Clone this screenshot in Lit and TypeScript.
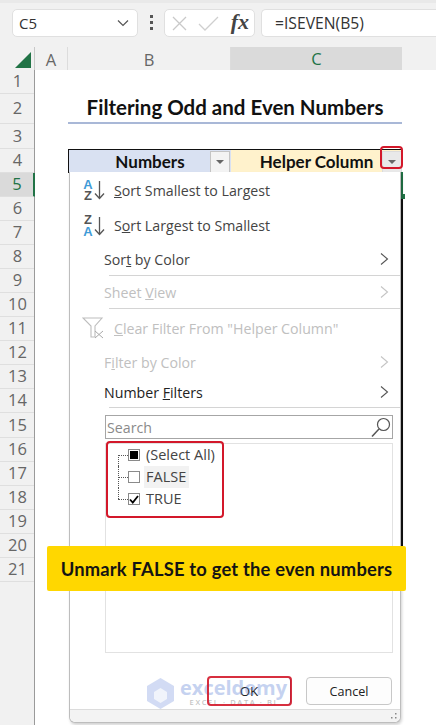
import { LitElement, html, css, svg } from "lit";
import { customElement } from "lit/decorators.js";

const chevron = (dim = false) => html`<svg class="chev" width="9" height="14" viewBox="0 0 9 14"><path d="M1 1.5 L7.5 7 L1 12.5" fill="none" stroke=${dim ? "#c4c4c4" : "#555"} stroke-width="1.1"/></svg>`;
const arrow = svg`<path d="M5.5 1 V18.5 M1 13.5 L5.5 18.5 L10 13.5" fill="none" stroke="#555" stroke-width="1.3"/>`;
const rowHeights = [24, 30, 25, 24, ...Array(17).fill(24.05)];

@customElement("app-root")
export class AppRoot extends LitElement {
  static styles = css`
    :host { display: block; width: 436px; height: 725px; font-family: "Open Sans", sans-serif; }
    * { box-sizing: border-box; }
    .app { position: relative; width: 436px; height: 725px; overflow: hidden; background: #f1f1f1; color: #333; display: flex; flex-direction: column; }

    .fbar { height: 47px; padding: 9px 0 0 12px; display: flex; align-items: flex-start; border-top: 3px solid #e9e9e9; }
    .box { height: 28px; background: #fff; border: 1px solid #e0e0e0; border-radius: 5px; display: flex; align-items: center; margin-top: -3px; }
    .name { width: 126px; padding: 0 8px 0 6px; justify-content: space-between; font-size: 15px; color: #333; }
    .dots { width: 26px; display: flex; flex-direction: column; align-items: center; gap: 3px; padding-top: 6px; margin-top: -3px; }
    .dots i { width: 3px; height: 3px; background: #555; display: block; }
    .fx { width: 91px; padding: 0 5px 0 7px; }
    .fx .check { margin-left: 11px; }
    .fxt { margin-left: auto; font-family: "Liberation Serif", serif; font-style: italic; font-weight: 700; font-size: 22px; line-height: 1; padding-bottom: 3px; color: #444; }
    .formula { flex: 1; margin-left: 6px; padding-left: 13px; border-right: none; border-radius: 5px 0 0 5px; font-size: 15.7px; color: #333; }

    .sheet { flex: 1; display: flex; flex-direction: column; }
    .colhead { height: 23px; display: grid; grid-template-columns: 35px 33px 163px 171px 1fr; font-size: 16.5px; color: #666; }
    .colhead > div { display: flex; align-items: center; justify-content: center; border-right: 1px solid #dcdcdc; padding-bottom: 1px; }
    .colhead > .corner { justify-content: flex-end; padding: 0 3px 1px 0; border-right: 1px solid #c8c8c8; }
    .colhead > .sel { background: #dadada; border-bottom: 2px solid #217346; color: #217346; border-right: none; }
    .colhead > .last { border: none; }

    .body { flex: 1; display: flex; }
    .rows { width: 35px; border-right: 1px solid #9a9a9a; flex: none; }
    .rownum { display: flex; align-items: center; justify-content: center; padding: 0 0 2px 1px; border-bottom: 1px solid #dfdfdf; font-size: 16.5px; color: #666; }
    .rownum.sel { background: #dadada; border-right: 2px solid #217346; margin-right: -1px; color: #217346; }
    .cells { flex: 1; background: #fff; display: grid; grid-template-columns: 33px 163px 171px 1fr; grid-template-rows: 24px 30px 25px 24px 1fr; }
    .title { grid-column: 2 / 4; grid-row: 2; display: flex; justify-content: center; align-items: center; padding-bottom: 2px; border-bottom: 2px solid #a9b8d7; font-family: Lato, sans-serif; font-weight: 700; font-size: 20.5px; color: #111; }
    .th { grid-row: 4; border-top: 1px solid #111; display: flex; align-items: center; justify-content: center; padding-bottom: 1px; font-family: Lato, sans-serif; font-weight: 700; font-size: 17px; color: #111; position: relative; }
    .th.b { grid-column: 2; background: #d9e1f2; border-left: 1px solid #111; }
    .th.c { grid-column: 3; background: #fff2cc; }
    .fbtn { position: absolute; right: 1px; top: 1px; width: 20px; height: 22px; background: #f3f3f3; border: 1px solid #c4c4c4; display: flex; align-items: center; justify-content: center; }
    .fbtn::after { content: ""; border: 4px solid transparent; border-top: 4px solid #666; border-bottom: none; }
    .th.c .fbtn { background: #e9e9e9; border-color: #dcdcdc; right: 0; }

    .menu { position: absolute; left: 69px; top: 172px; width: 332px; height: 551px; background: #fff; border: 1px solid #bdbdbd; border-top: none; border-radius: 0 0 6px 6px; box-shadow: 1px 2px 3px rgba(0,0,0,.18); display: flex; flex-direction: column; font-size: 14.2px; }
    .blackline { position: absolute; left: 401px; top: 172px; width: 2px; height: 374px; background: #111; }
    .selmark { position: absolute; left: 401px; top: 172px; width: 2px; height: 24px; background: #217346; }
    .handle { position: absolute; left: 400px; top: 194px; width: 5px; height: 5px; background: #217346; }
    .item { display: flex; align-items: center; justify-content: space-between; padding: 0 11px 0 34px; color: #444; flex: none; }
    .item.icon { padding-left: 12px; }
    .item.icon .lab { display: flex; align-items: center; gap: 8px; }
    .item.dim { color: #c0c0c0; }
    .item.dark { color: #222; }
    .sep { height: 1px; background: #d4d4d4; margin-left: 39px; flex: none; }
    .glyph { width: 24px; height: 26px; display: flex; align-items: center; position: relative; flex: none; }
    .az { display: flex; flex-direction: column; width: 12px; font-family: "Liberation Sans", sans-serif; font-weight: 700; font-size: 13px; line-height: 11.5px; text-align: center; }
    .az .bl { color: #3f9bd7; }
    .az .gr { color: #555; }
    .search { margin: 7px 7px 0 35px; height: 24px; border: 1px solid #a6a6a6; display: flex; align-items: center; justify-content: space-between; padding: 0 1px 0 1px; color: #8a8a8a; font-size: 14.2px; flex: none; }
    .list { margin: 4px 7px 0 35px; height: 210px; border: 1px solid #e2e2e2; flex: none; }
    .li { height: 22px; display: flex; align-items: center; font-size: 14.5px; color: #444; padding-left: 12px; }
    .li > span:last-child { padding-bottom: 1px; }
    .li .conn { width: 10px; height: 22px; position: relative; flex: none; }
    .li .conn::before { content: ""; position: absolute; left: 0; right: 0; top: 11px; border-top: 1px dotted #555; }
    .li .conn::after { content: ""; position: absolute; left: 0; top: 11px; bottom: 0; border-left: 1px dotted #555; }
    .li .conn.mid::after { top: 0; bottom: 0; }
    .li .conn.end::after { top: 0; bottom: 11px; }
    .cb { width: 12px; height: 12px; border: 1px solid #8a8a8a; background: #fff; margin-right: 6px; display: flex; align-items: center; justify-content: center; flex: none; }
    .cb i { width: 8px; height: 8px; background: #000; display: block; }
    .li > .hl { background: #f2f2f2; padding: 0 3px 1px 2px; margin-left: -2px; height: 22px; line-height: 21px; }
    .footer { flex: 1; display: flex; justify-content: flex-end; gap: 15px; padding: 24px 8px 0 0; }
    .btn { height: 28px; border: 1px solid #c8c8c8; border-radius: 4px; background: #fdfdfd; display: flex; align-items: center; justify-content: center; font-size: 12.6px; color: #222; }
    .ok { width: 83px; border-color: #2a5a94; border-width: 0 1px 0 0; background: #fff; font-size: 13.4px; }
    .cancel { width: 86px; }
    .status { height: 13px; background: #f3f3f3; border-top: 1px solid #dcdcdc; border-radius: 0 0 6px 6px; flex: none; display: flex; justify-content: flex-end; }

    .red { position: absolute; border: 2px solid #d3182a; border-radius: 4px; pointer-events: none; }
    .r1 { left: 380px; top: 146px; width: 23px; height: 23px; }
    .r2 { left: 106px; top: 441px; width: 118px; height: 77px; }
    .r3 { left: 207px; top: 676px; width: 85px; height: 30px; opacity: .9; }
    .banner { position: absolute; left: 47px; top: 546px; width: 359px; height: 45px; background: #ffd700; border-radius: 2px; display: flex; align-items: center; justify-content: center; font-family: Lato, sans-serif; font-weight: 700; font-size: 18.35px; color: #141414; letter-spacing: .2px; }
    .mark { position: absolute; left: 147px; top: 678px; width: 150px; height: 31px; display: flex; gap: 6px; opacity: .35; pointer-events: none; }
    .mark .tx { display: flex; flex-direction: column; align-items: center; line-height: 1; }
    .mark .big { font-family: "Open Sans", sans-serif; font-weight: 700; font-size: 20px; color: #5b7fd6; }
    .mark .small { font-size: 7.5px; letter-spacing: 1.6px; color: #555; font-weight: 600; margin-top: 1px; }
  `;

  render() {
    return html`<div class="app">
      <div class="fbar">
        <div class="box name"><span>C5</span><svg width="12" height="8" viewBox="0 0 12 8"><path d="M1 1.5 L6 6.5 L11 1.5" fill="none" stroke="#555" stroke-width="1.2"/></svg></div>
        <div class="dots"><i></i><i></i><i></i></div>
        <div class="box fx">
          <svg width="15" height="15" viewBox="0 0 15 15"><path d="M1 1 L14 14 M14 1 L1 14" stroke="#c9c9c9" stroke-width="1.3" fill="none"/></svg>
          <svg class="check" width="21" height="15" viewBox="0 0 21 15"><path d="M1 8 L7 14 L20 1" stroke="#cfcfcf" stroke-width="1.3" fill="none"/></svg>
          <span class="fxt">fx</span>
        </div>
        <div class="box formula">=ISEVEN(B5)</div>
      </div>
      <div class="sheet">
        <div class="colhead">
          <div class="corner"><svg width="16" height="16" viewBox="0 0 16 16"><path d="M16 0 V16 H0 Z" fill="#217346"/></svg></div>
          <div>A</div><div>B</div><div class="sel">C</div><div class="last"></div>
        </div>
        <div class="body">
          <div class="rows">
            ${rowHeights.map((h, i) => html`<div class="rownum ${i === 4 ? "sel" : ""}" style="height:${h}px">${i + 1}</div>`)}
          </div>
          <div class="cells">
            <div class="title">Filtering Odd and Even Numbers</div>
            <div class="th b">Numbers<span class="fbtn"></span></div>
            <div class="th c">Helper Column<span class="fbtn"></span></div>
          </div>
        </div>
      </div>

      <div class="blackline"></div>
      <div class="selmark"></div>
      <div class="handle"></div>

      <div class="menu">
        <div class="item icon" style="height:36px">
          <span class="lab"><span class="glyph"><span class="az"><span class="bl">A</span><span class="gr">Z</span></span><svg width="11" height="20" viewBox="0 0 11 20">${arrow}</svg></span><span><u>S</u>ort Smallest to Largest</span></span>
        </div>
        <div class="item icon" style="height:35px">
          <span class="lab"><span class="glyph"><span class="az"><span class="gr">Z</span><span class="bl">A</span></span><svg width="11" height="20" viewBox="0 0 11 20">${arrow}</svg></span><span>S<u>o</u>rt Largest to Smallest</span></span>
        </div>
        <div class="item" style="height:32px"><span>Sor<u>t</u> by Color</span>${chevron()}</div>
        <div class="sep"></div>
        <div class="item dim" style="height:32px"><span>Sheet <u>V</u>iew</span>${chevron(true)}</div>
        <div class="sep"></div>
        <div class="item icon dim" style="height:38px">
          <span class="lab"><span class="glyph"><svg width="22" height="22" viewBox="0 0 22 22"><path d="M1 1 H20 L13 9 V20 H9 V9 Z" fill="none" stroke="#bdbdbd" stroke-width="1.1"/><path d="M13 14 L21 21 M21 14 L13 21" stroke="#a9a9a9" stroke-width="1"/></svg></span><span><u>C</u>lear Filter From "Helper Column"</span></span>
        </div>
        <div class="item dim" style="height:30px"><span>F<u>i</u>lter by Color</span>${chevron(true)}</div>
        <div class="item dark" style="height:30px"><span>Number <u>F</u>ilters</span>${chevron()}</div>
        <div class="sep"></div>
        <div class="search"><span>Search</span>
          <svg width="20" height="21" viewBox="0 0 20 21"><circle cx="12.5" cy="7.5" r="6" fill="none" stroke="#555" stroke-width="1.2"/><path d="M8 12 L1 19.5" stroke="#555" stroke-width="1.5"/></svg>
        </div>
        <div class="list">
          <div class="li"><span class="conn"></span><span class="cb"><i></i></span><span>(Select All)</span></div>
          <div class="li"><span class="conn mid"></span><span class="cb"></span><span class="hl">FALSE</span></div>
          <div class="li"><span class="conn end"></span><span class="cb"><svg width="10" height="9" viewBox="0 0 10 9"><path d="M1 4.5 L3.8 7.5 L9 1" fill="none" stroke="#000" stroke-width="1.8"/></svg></span><span>TRUE</span></div>
        </div>
        <div class="footer">
          <div class="btn ok">OK</div>
          <div class="btn cancel">Cancel</div>
        </div>
        <div class="status"><svg width="12" height="12" viewBox="0 0 12 12"><path d="M7 3h1.5v1.5H7zM3 7h1.5v1.5H3zM7 7h1.5v1.5H7z" fill="#888"/></svg></div>
      </div>

      <div class="mark">
        <svg width="27" height="31" viewBox="0 0 27 31"><path d="M13.5 0 L27 8 V23 L13.5 31 L0 23 V8 Z" fill="#7f9be0"/><path d="M13.5 10 L20 14 V21 L13.5 25 L7 21 V14 Z" fill="#fff" opacity=".7"/></svg>
        <div class="tx"><span class="big">exceldemy</span><span class="small">EXCEL · DATA · BI</span></div>
      </div>

      <div class="red r1"></div>
      <div class="red r2"></div>
      <div class="red r3"></div>
      <div class="banner">Unmark FALSE to get the even numbers</div>
    </div>`;
  }
}
